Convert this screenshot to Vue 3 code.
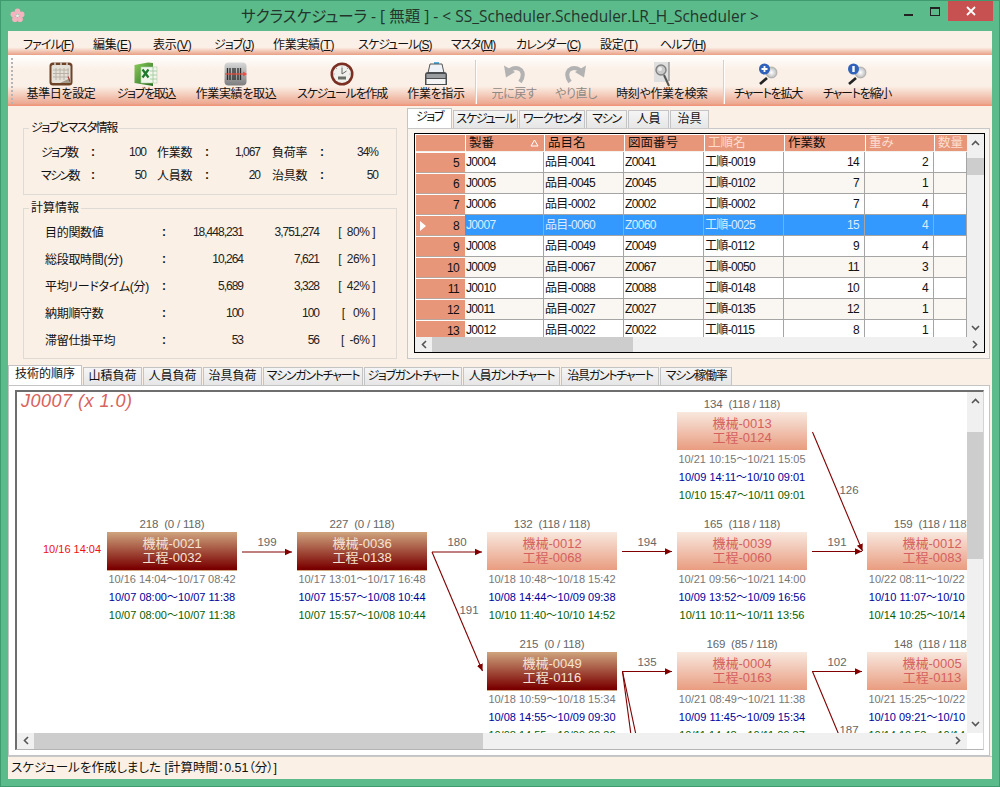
<template>
  <div class="win">
    <header class="titlebar">
      <svg class="logo" viewBox="0 0 16 16">
        <g fill="#f4b4bf">
          <circle cx="8" cy="3.6" r="3" /><circle cx="12.4" cy="6.8" r="3" /><circle cx="10.7" cy="12" r="3" />
          <circle cx="5.3" cy="12" r="3" /><circle cx="3.6" cy="6.8" r="3" />
        </g>
        <circle cx="8" cy="8.2" r="1.6" fill="#fbe6ea" />
      </svg>
      <div class="title">サクラスケジューラ - [ 無題 ] - &lt; SS_Scheduler.Scheduler.LR_H_Scheduler &gt;</div>
      <i class="wmin"></i>
      <i class="wmax"></i>
      <div class="wclose">
        <svg viewBox="0 0 10 10" width="10" height="10"><path d="M1 1L9 9M9 1L1 9" stroke="#fff" stroke-width="1.8" /></svg>
      </div>
    </header>

    <div class="client">
      <nav class="menu">
        <span v-for="m in menus" :key="m[0]" :class="{ kana: hasKana(m[0]) }">{{ m[0] }}(<u>{{ m[1] }}</u>)</span>
      </nav>

      <div class="toolbar">
        <div class="grip"></div>
        <template v-for="b in tools" :key="b.label">
          <i v-if="b.sep" class="tsep"></i>
          <div class="tool" :class="{ off: b.off, kana: hasKana(b.label) }">
            <div class="ticon">
              <svg v-if="b.icon === 'cal'" viewBox="0 0 24 24" width="24" height="24">
                <rect x="0.5" y="0.5" width="23" height="23" rx="3.5" fill="#6f4328" />
                <rect x="2.5" y="3" width="19" height="18" rx="1.5" fill="#e6e1d8" />
                <path d="M4 8h16M4 11.5h16M4 15h16M7 6v12M11 6v12M15 6v12M19 6v8" stroke="#b8b2a6" stroke-width="1" />
                <path d="M11 21L21.5 16V21Z" fill="#a89c8e" /><path d="M19 14.5l2 5" stroke="#a6403a" stroke-width="1.2" />
                <path d="M6 0.5v4M12 0.5v4M18 0.5v4" stroke="#ddd" stroke-width="1.4" />
              </svg>
              <svg v-else-if="b.icon === 'xls'" viewBox="0 0 24 24" width="24" height="24">
                <defs>
                  <linearGradient id="xg" x1="0" y1="0" x2="1" y2="1"><stop offset="0" stop-color="#8ccb5a" /><stop offset="1" stop-color="#246b1f" /></linearGradient>
                </defs>
                <path d="M0.5 3L14 0.5L19 1V24L0.5 21Z" fill="url(#xg)" />
                <rect x="7" y="5" width="16" height="16" fill="#f1f6ea" stroke="#b6ccb0" stroke-width="0.6" />
                <path d="M16 9h7M16 13h7M16 17h7M19 5v16" stroke="#9cc69a" stroke-width="0.8" />
                <path d="M8.5 7.5l6 8M14.5 7.5l-6 8" stroke="#1e7a2c" stroke-width="2.2" />
              </svg>
              <svg v-else-if="b.icon === 'bar'" viewBox="0 0 24 24" width="24" height="24">
                <defs>
                  <linearGradient id="bg" x1="0" y1="0" x2="0" y2="1"><stop offset="0" stop-color="#d8d8d8" /><stop offset="1" stop-color="#7d7d7d" /></linearGradient>
                </defs>
                <rect x="0.5" y="0.5" width="22" height="23" rx="4" fill="url(#bg)" />
                <path d="M3.5 6v12M6 6v12M9 6v12M11 6v12M14 6v12M16.5 6v12" stroke="#2b2b2b" stroke-width="1.3" />
                <path d="M1 12H20" stroke="#ef4a3c" stroke-width="1.2" /><path d="M19 9.5L23 12L19 14.5Z" fill="#ef4a3c" />
              </svg>
              <svg v-else-if="b.icon === 'clock'" viewBox="0 0 24 24" width="24" height="24">
                <circle cx="12" cy="12" r="11.5" fill="#7b2f22" />
                <circle cx="12" cy="12" r="9" fill="#f0f0ec" />
                <path d="M12 12V5.5M12 12L16.5 9" stroke="#555" stroke-width="0.9" />
                <rect x="8" y="14.5" width="8" height="3" fill="#6a6d66" />
                <path d="M12 3.5v1M20.5 12h-1M3.5 12h1M6 6l.8.8M18 6l-.8.8" stroke="#888" />
              </svg>
              <svg v-else-if="b.icon === 'print'" viewBox="0 0 24 24" width="24" height="24">
                <rect x="10" y="-1" width="5" height="3" fill="#58aee0" />
                <path d="M6 2H18L20 11H4Z" fill="#eef2f6" stroke="#444" stroke-width="0.9" />
                <path d="M1 13Q1 10 4 10H20Q23 10 23 13V23H1Z" fill="#4a4e51" />
                <rect x="2.5" y="12" width="19" height="4" fill="#9a9da0" />
                <rect x="2.5" y="17" width="19" height="5" fill="#f4f4f4" />
              </svg>
              <svg v-else-if="b.icon === 'undo'" viewBox="0 0 24 24" width="24" height="24">
                <path d="M8 8Q14 4 19 8Q23 13 18 20" fill="none" stroke="#b2b2b2" stroke-width="4" />
                <path d="M2 3.5L4 15.5L13 10Z" fill="#b2b2b2" />
              </svg>
              <svg v-else-if="b.icon === 'redo'" viewBox="0 0 24 24" width="24" height="24">
                <path d="M16 8Q10 4 5 8Q1 13 6 20" fill="none" stroke="#b2b2b2" stroke-width="4" />
                <path d="M22 3.5L20 15.5L11 10Z" fill="#b2b2b2" />
              </svg>
              <svg v-else-if="b.icon === 'find'" viewBox="0 0 24 30" width="24" height="30">
                <rect x="4" y="0" width="15" height="20" fill="#dfdfdf" />
                <path d="M19 0V19" stroke="#777" stroke-width="1" />
                <circle cx="11" cy="8" r="5" fill="#c9c9c9" stroke="#808080" stroke-width="1.4" />
                <circle cx="10" cy="7" r="2" fill="#eee" />
                <path d="M14 13L19 24" stroke="#555" stroke-width="2" />
              </svg>
              <svg v-else viewBox="0 0 24 24" width="24" height="24">
                <defs>
                  <radialGradient id="wg"><stop offset="0" stop-color="#fff" /><stop offset="1" stop-color="#b9b9b9" /></radialGradient>
                </defs>
                <circle cx="15.5" cy="10.5" r="5.5" fill="url(#wg)" stroke="#999" stroke-width="0.6" />
                <circle cx="8.5" cy="7" r="5.5" fill="#2f62b8" />
                <path v-if="b.icon === 'plus'" d="M5.5 7h6M8.5 4v6" stroke="#fff" stroke-width="1.8" />
                <path v-else d="M8.5 4v6" stroke="#fff" stroke-width="2.4" />
                <path d="M11 16L4 22" stroke="#222" stroke-width="2.6" />
              </svg>
            </div>
            <span>{{ b.label }}</span>
          </div>
        </template>
      </div>

      <section class="mid">
        <div class="left">
          <fieldset class="fs fs1">
            <legend class="kana">ジョブとマスタ情報</legend>
            <div class="g1">
              <template v-for="(c, i) in group1" :key="i">
                <span class="lbl" :class="{ kana: hasKana(c[0]) }">{{ c[0] }}</span><b>:</b><span class="val">{{ c[1] }}</span>
              </template>
            </div>
          </fieldset>
          <fieldset class="fs fs2">
            <legend>計算情報</legend>
            <div class="g2">
              <template v-for="r in group2" :key="r[0]">
                <span class="lbl">{{ r[0] }}</span><b>:</b>
                <span class="val">{{ r[1] }}</span><span class="val">{{ r[2] }}</span><span class="val pct">{{ r[3] }}</span>
              </template>
            </div>
          </fieldset>
        </div>

        <div class="right">
          <div class="tabs tabs-top">
            <span v-for="(t, i) in topTabs" :key="t" class="tab" :class="{ on: i === 0, kana: hasKana(t) }">{{ t }}</span>
          </div>
          <div class="tabpanel">
            <div class="dg">
              <div class="dg-main">
                <div class="dg-table">
                  <div class="th rh"></div>
                  <div v-for="h in heads" :key="h.t" class="th" :class="{ pale: h.pale }">
                    {{ h.t }}<svg v-if="h.sort" class="sort" viewBox="0 0 9 8" width="9" height="8"><path d="M4.5 1L8 7H1Z" fill="none" stroke="#fff" /></svg>
                  </div>
                  <template v-for="(r, i) in rows" :key="r[0]">
                    <div class="rowh">
                      <svg v-if="r[0] === 8" viewBox="0 0 6 10" width="6" height="10"><path d="M0 0L6 5L0 10Z" fill="#fff" /></svg>
                      {{ r[0] }}
                    </div>
                    <div
                      v-for="(c, j) in r.slice(1)"
                      :key="j"
                      class="td"
                      :class="{ sel: r[0] === 8, alt: i % 2 === 1 && r[0] !== 8, num: j > 3 && j < 6 }"
                    >{{ c }}</div>
                  </template>
                </div>
                <div class="vbar vbar-top">
                  <svg viewBox="0 0 9 6" width="9" height="6"><path d="M1 5L4.5 1.5L8 5" fill="none" stroke="#555" stroke-width="1.6" /></svg>
                  <i class="thumb"></i>
                  <svg class="endarrow" viewBox="0 0 9 6" width="9" height="6"><path d="M1 1L4.5 4.5L8 1" fill="none" stroke="#555" stroke-width="1.6" /></svg>
                </div>
              </div>
              <div class="hbar hbar-top">
                <svg viewBox="0 0 6 9" width="6" height="9"><path d="M5 1L1.5 4.5L5 8" fill="none" stroke="#555" stroke-width="1.6" /></svg>
                <i class="thumb"></i>
                <svg class="endarrow" viewBox="0 0 6 9" width="6" height="9"><path d="M1 1L4.5 4.5L1 8" fill="none" stroke="#555" stroke-width="1.6" /></svg>
              </div>
            </div>
          </div>
        </div>
      </section>

      <div class="tabs tabs-bottom">
        <span v-for="(t, i) in bottomTabs" :key="t" class="tab" :class="{ on: i === 0, kana: hasKana(t) }">{{ t }}</span>
      </div>

      <section class="chartpanel">
        <div class="chartframe">
          <div class="canvas">
            <div class="charttitle">J0007  (x 1.0)</div>
            <div class="due">10/16 14:04</div>
            <div v-for="n in nodes" :key="n.a + n.b" class="node" :style="{ left: n.x - 17 + 'px', top: n.y - 411 + 'px' }">
              <div class="cap">{{ n.cap }}</div>
              <div class="box" :class="{ dark: n.dark }">
                <div>{{ n.a }}</div>
                <div>{{ n.b }}</div>
              </div>
              <div class="tm t1">{{ n.t[0] }}</div>
              <div class="tm t2">{{ n.t[1] }}</div>
              <div class="tm t3">{{ n.t[2] }}</div>
            </div>
            <svg class="links" viewBox="17 392 950 341" width="950" height="341">
              <defs>
                <marker id="ah" markerUnits="userSpaceOnUse" markerWidth="8" markerHeight="8" refX="7" refY="4" orient="auto">
                  <path d="M0 0.8L7 4L0 7.2Z" fill="#800000" />
                </marker>
              </defs>
              <path v-for="(l, i) in links" :key="i" :d="l.d" :marker-end="l.open ? null : 'url(#ah)'" fill="none" stroke="#800000" stroke-width="1.1" />
            </svg>
            <span v-for="l in linkLabels" :key="l[1] + '-' + l[2]" class="linklabel" :style="{ left: l[1] - 17 + 'px', top: l[2] - 392 + 'px' }">{{ l[0] }}</span>
          </div>
          <div class="vbar vbar-chart">
            <svg viewBox="0 0 9 6" width="9" height="6"><path d="M1 5L4.5 1.5L8 5" fill="none" stroke="#555" stroke-width="1.6" /></svg>
            <i class="thumb"></i>
            <svg class="endarrow" viewBox="0 0 9 6" width="9" height="6"><path d="M1 1L4.5 4.5L8 1" fill="none" stroke="#555" stroke-width="1.6" /></svg>
          </div>
          <div class="hbar hbar-chart">
            <svg viewBox="0 0 6 9" width="6" height="9"><path d="M5 1L1.5 4.5L5 8" fill="none" stroke="#555" stroke-width="1.6" /></svg>
            <i class="thumb"></i>
            <svg class="endarrow" viewBox="0 0 6 9" width="6" height="9"><path d="M1 1L4.5 4.5L1 8" fill="none" stroke="#555" stroke-width="1.6" /></svg>
          </div>
          <div class="corner"></div>
        </div>
      </section>

      <footer class="status">スケジュールを作成しました [計算時間：0.51（分）]</footer>
    </div>
  </div>
</template>

<script setup>
const hasKana = (t) => /[ァ-ヶ]/.test(t)

const menus = [
  ['ファイル', 'F'], ['編集', 'E'], ['表示', 'V'], ['ジョブ', 'J'], ['作業実績', 'T'],
  ['スケジュール', 'S'], ['マスタ', 'M'], ['カレンダー', 'C'], ['設定', 'T'], ['ヘルプ', 'H'],
]

const tools = [
  { label: '基準日を設定', icon: 'cal' },
  { label: 'ジョブを取込', icon: 'xls' },
  { label: '作業実績を取込', icon: 'bar' },
  { label: 'スケジュールを作成', icon: 'clock' },
  { label: '作業を指示', icon: 'print' },
  { label: '元に戻す', icon: 'undo', off: true, sep: true },
  { label: 'やり直し', icon: 'redo', off: true },
  { label: '時刻や作業を検索', icon: 'find' },
  { label: 'チャートを拡大', icon: 'plus', sep: true },
  { label: 'チャートを縮小', icon: 'minus' },
]

const group1 = [
  ['ジョブ数', '100'], ['作業数', '1,067'], ['負荷率', '34%'],
  ['マシン数', '50'], ['人員数', '20'], ['治具数', '50'],
]

const group2 = [
  ['目的関数値', '18,448,231', '3,751,274', '[  80% ]'],
  ['総段取時間(分)', '10,264', '7,621', '[  26% ]'],
  ['平均リードタイム(分)', '5,689', '3,328', '[  42% ]'],
  ['納期順守数', '100', '100', '[   0% ]'],
  ['滞留仕掛平均', '53', '56', '[  -6% ]'],
]

const topTabs = ['ジョブ', 'スケジュール', 'ワークセンタ', 'マシン', '人員', '治具']
const bottomTabs = ['技術的順序', '山積負荷', '人員負荷', '治具負荷', 'マシンガントチャート', 'ジョブガントチャート', '人員ガントチャート', '治具ガントチャート', 'マシン稼働率']

const heads = [
  { t: '製番', sort: true }, { t: '品目名' }, { t: '図面番号' },
  { t: '工順名', pale: true }, { t: '作業数' }, { t: '重み', pale: true }, { t: '数量', pale: true },
]

const rows = [
  [5, 'J0004', '品目-0041', 'Z0041', '工順-0019', 14, 2, ''],
  [6, 'J0005', '品目-0045', 'Z0045', '工順-0102', 7, 1, ''],
  [7, 'J0006', '品目-0002', 'Z0002', '工順-0002', 7, 4, ''],
  [8, 'J0007', '品目-0060', 'Z0060', '工順-0025', 15, 4, ''],
  [9, 'J0008', '品目-0049', 'Z0049', '工順-0112', 9, 4, ''],
  [10, 'J0009', '品目-0067', 'Z0067', '工順-0050', 11, 3, ''],
  [11, 'J0010', '品目-0088', 'Z0088', '工順-0148', 10, 4, ''],
  [12, 'J0011', '品目-0027', 'Z0027', '工順-0135', 12, 1, ''],
  [13, 'J0012', '品目-0022', 'Z0022', '工順-0115', 8, 1, ''],
]

const nodes = [
  { x: 107, y: 532, dark: true, cap: '218  (0 / 118)', a: '機械-0021', b: '工程-0032', t: ['10/16 14:04～10/17 08:42', '10/07 08:00～10/07 11:38', '10/07 08:00～10/07 11:38'] },
  { x: 297, y: 532, dark: true, cap: '227  (0 / 118)', a: '機械-0036', b: '工程-0138', t: ['10/17 13:01～10/17 16:48', '10/07 15:57～10/08 10:44', '10/07 15:57～10/08 10:44'] },
  { x: 487, y: 532, cap: '132  (118 / 118)', a: '機械-0012', b: '工程-0068', t: ['10/18 10:48～10/18 15:42', '10/08 14:44～10/09 09:38', '10/10 11:40～10/10 14:52'] },
  { x: 677, y: 412, cap: '134  (118 / 118)', a: '機械-0013', b: '工程-0124', t: ['10/21 10:15～10/21 15:05', '10/09 14:11～10/10 09:01', '10/10 15:47～10/11 09:01'] },
  { x: 677, y: 532, cap: '165  (118 / 118)', a: '機械-0039', b: '工程-0060', t: ['10/21 09:56～10/21 14:00', '10/09 13:52～10/09 16:56', '10/11 10:11～10/11 13:56'] },
  { x: 867, y: 532, cap: '159  (118 / 118)', a: '機械-0012', b: '工程-0083', t: ['10/22 08:11～10/22 13:05', '10/10 11:07～10/10 15:42', '10/14 10:25～10/14 15:00'] },
  { x: 487, y: 652, dark: true, cap: '215  (0 / 118)', a: '機械-0049', b: '工程-0116', t: ['10/18 10:59～10/18 15:34', '10/08 14:55～10/09 09:30', '10/08 14:55～10/09 09:30'] },
  { x: 677, y: 652, cap: '169  (85 / 118)', a: '機械-0004', b: '工程-0163', t: ['10/21 08:49～10/21 11:38', '10/09 11:45～10/09 15:34', '10/11 14:48～10/11 09:37'] },
  { x: 867, y: 652, cap: '148  (118 / 118)', a: '機械-0005', b: '工程-0113', t: ['10/21 15:25～10/22 09:14', '10/10 09:21～10/10 13:10', '10/14 10:53～10/14 15:28'] },
]

const links = [
  { d: 'M242 552H292' },
  { d: 'M432 552H482' },
  { d: 'M432 552L482.5 671' },
  { d: 'M622 551.5H672' },
  { d: 'M812 551.5H862' },
  { d: 'M812.5 432L862.5 551' },
  { d: 'M622 671.5H672' },
  { d: 'M622.5 671.5L631 735', open: true },
  { d: 'M622.5 671.5L636 735', open: true },
  { d: 'M812 671.5H862' },
  { d: 'M812.5 671.5L839 735', open: true },
]

const linkLabels = [
  ['199', 267, 542], ['180', 457, 542], ['191', 469, 610], ['194', 647, 542], ['191', 837, 542],
  ['126', 849, 490], ['135', 647, 662], ['102', 837, 662], ['187', 849, 730],
]
</script>

<style scoped>
.win {
  width: 1000px;
  height: 787px;
  box-sizing: border-box;
  background: #5bbb8b;
  border: 1px solid #3f9a70;
  padding: 0 7px 7px;
  display: flex;
  flex-direction: column;
  font-family: "Liberation Sans", "Noto Sans CJK JP", sans-serif;
  font-feature-settings: "palt";
  font-size: 12px;
  color: #111;
  overflow: hidden;
}
.titlebar { height: 30px; flex: none; position: relative; }
.logo { position: absolute; left: 2px; top: 7px; width: 15px; height: 15px; }
.title {
  text-align: center;
  font-family: "Open Sans", "Noto Sans CJK JP", sans-serif;
  font-size: 15.5px;
  line-height: 30px;
  color: #24352c;
  white-space: pre;
}
.wmin { position: absolute; left: 896px; top: 13px; width: 9px; height: 2px; background: #222; }
.wmax { position: absolute; left: 922px; top: 6px; width: 8px; height: 6px; border: 1px solid #222; border-top-width: 2px; }
.wclose {
  position: absolute;
  left: 940px;
  top: 0;
  width: 45px;
  height: 20px;
  background: #c75050;
  display: flex;
  align-items: center;
  justify-content: center;
}
.client { flex: 1; display: flex; flex-direction: column; background: #faf0e6; min-height: 0; }

.menu {
  height: 24px;
  flex: none;
  box-sizing: border-box;
  padding-left: 15px;
  display: grid;
  grid-template-columns: 70px 60px 61px 59px 85px 93px 65px 84px 60px 70px;
  align-items: center;
  background: linear-gradient(#fbf0e7 0, #fbf0e7 68%, #e99f84 100%);
  white-space: nowrap;
  letter-spacing: -0.3px;
}
.menu .kana { letter-spacing: -0.95px; }
.toolbar {
  height: 51px;
  flex: none;
  box-sizing: border-box;
  display: grid;
  grid-template-columns: 11px 84px 86px 94px 118px 70px 10px 66px 58px 114px 4px 90px 88px;
  background: linear-gradient(#ffffff 0, #fbf0e7 30%, #fbf0e7 62%, #eca78f 98%, #f09579 100%);
  border-bottom: 1px solid #f09579;
  position: relative;
}
.grip { margin: 3px 0 1px 3px; width: 2px; border-left: 2px dotted #b5b5b5; }
.tsep { width: 1px; background: #d5d0ca; box-shadow: 1px 0 #fff; margin: 5px 0 0 4px; justify-self: start; height: 44px; }
.tool { display: flex; flex-direction: column; align-items: center; white-space: nowrap; letter-spacing: -0.35px; }
.tool.kana { letter-spacing: -1.25px; }
.tool.off { color: #8e8a86; }
.ticon { height: 31px; padding-top: 7px; box-sizing: border-box; }
.ticon svg { display: block; }
.tool span { line-height: 16px; }

.mid { height: 257px; flex: none; display: grid; grid-template-columns: 399px 583px; }
.left { padding: 14px 0 0 15px; display: flex; flex-direction: column; gap: 5px; box-sizing: border-box; }
.fs {
  margin: 0;
  padding: 0;
  border: 1px solid #dedbd6;
  width: 374px;
  min-width: 0;
  box-sizing: border-box;
}
.fs legend { padding: 0 2px; margin-left: 5px; line-height: 16px; height: 16px; font-size: 12px; }
.fs legend.kana { letter-spacing: -1.3px; }
.fs1 { height: 75px; }
.fs2 { height: 159px; }
.lbl { white-space: pre; letter-spacing: -0.3px; }
.g1 .lbl.kana { letter-spacing: -1.7px; }
.val { text-align: right; letter-spacing: -1px; white-space: pre; color: #222; }
.pct { letter-spacing: -0.5px; }
.g1 b, .g2 b { font-weight: 700; }
.g1 {
  padding: 4px 0 0 17px;
  display: grid;
  grid-template-columns: 50px 8px 47px 59px 8px 47px 60px 8px 50px;
  grid-auto-rows: 23px;
  align-items: center;
}
.g1 > :nth-child(4), .g1 > :nth-child(13) { margin-left: 11px; }
.g1 > :nth-child(7), .g1 > :nth-child(16) { margin-left: 12px; }
.g2 {
  padding: 2px 0 0 21px;
  display: grid;
  grid-template-columns: 117px 10px 71px 76px 56px;
  grid-auto-rows: 27px;
  align-items: center;
}

.tabs { display: flex; align-items: flex-end; }
.tab {
  box-sizing: border-box;
  height: 18px;
  line-height: 17px;
  text-align: center;
  background: linear-gradient(#f5f5f5, #e6e6e6);
  border: 1px solid #c4c4c4;
  border-bottom: none;
  margin-right: 1px;
  white-space: nowrap;
}
.tab.kana { letter-spacing: -1.3px; }
.tab.on { background: #fff; height: 20px; position: relative; }
.tabs-top { height: 22px; box-sizing: border-box; padding-top: 2px; }
.tabs-top .tab:nth-child(1) { width: 45px; }
.tabs-top .tab:nth-child(2) { width: 65px; }
.tabs-top .tab:nth-child(3) { width: 66px; }
.tabs-top .tab:nth-child(4) { width: 41px; }
.tabs-top .tab:nth-child(5) { width: 41px; }
.tabs-top .tab:nth-child(6) { width: 39px; }
.tabpanel {
  height: 231px;
  box-sizing: border-box;
  width: 583px;
  border: 1px solid #c8c8c8;
  background: #fbf5ef;
  padding: 4px 4px 4px 6px;
}
.dg { height: 220px; width: 571px; box-sizing: border-box; border: 1px solid #000; background: #fff; display: flex; flex-direction: column; }
.dg-main { height: 203px; display: flex; flex: none; }
.dg-table {
  margin-left: 1px;
  width: 551px;
  height: 203px;
  padding-top: 1px;
  box-sizing: border-box;
  overflow: hidden;
  display: grid;
  grid-template-columns: 49px 79px 80px 80px 80px 81px 69px 33px;
  grid-template-rows: 17px;
  grid-auto-rows: 21px;
  font-size: 12px;
  letter-spacing: -0.65px;
}
.th {
  background: #e8967a;
  border-left: 1px solid #fff;
  border-bottom: 1px solid #f4f0ec;
  padding-left: 3px;
  line-height: 16px;
  font-size: 12.5px;
  letter-spacing: 0;
  position: relative;
  white-space: nowrap;
  overflow: hidden;
}
.th.rh { border-left: none; padding: 0; }
.th.pale { color: #fbdccd; }
.sort { position: absolute; right: 5px; top: 4px; }
.rowh {
  background: #e8967a;
  border-top: 1px solid #fff;
  border-bottom: 1px solid #b7a69d;
  text-align: right;
  padding-right: 6px;
  line-height: 20px;
  position: relative;
}
.rowh svg { position: absolute; left: 4px; top: 5px; }
.td {
  border-right: 1px solid #a5a5a5;
  border-bottom: 1px solid #a5a5a5;
  line-height: 20px;
  padding: 0 2px 0 1px;
  background: #fff;
  white-space: nowrap;
  overflow: hidden;
}
.td.alt { background: #faf6f2; }
.td.sel { background: #3399ff; color: #dcecff; }
.td.num { text-align: right; padding-right: 5px; }

.vbar { background: #f0f0f0; position: relative; }
.vbar svg { position: absolute; top: 6px; left: 4px; }
.vbar svg.endarrow { top: auto; bottom: 6px; }
.vbar .thumb { position: absolute; left: 0; right: 0; background: #cdcdcd; }
.hbar { background: #f0f0f0; position: relative; }
.hbar svg { position: absolute; left: 6px; top: 3px; }
.hbar svg.endarrow { left: auto; right: 6px; }
.hbar .thumb { position: absolute; top: 0; bottom: 0; background: #cdcdcd; }
.vbar-top { width: 17px; }
.vbar-top .thumb { top: 24px; height: 17px; }
.hbar-top { height: 15px; }
.hbar-top .thumb { left: 17px; width: 201px; }

.tabs-bottom { height: 22px; flex: none; box-sizing: border-box; }
.tabs-bottom .tab:nth-child(1) { width: 74px; }
.tabs-bottom .tab:nth-child(2) { width: 59px; }
.tabs-bottom .tab:nth-child(3) { width: 59px; }
.tabs-bottom .tab:nth-child(4) { width: 59px; }
.tabs-bottom .tab:nth-child(5) { width: 100px; }
.tabs-bottom .tab:nth-child(6) { width: 98px; }
.tabs-bottom .tab:nth-child(7) { width: 97px; }
.tabs-bottom .tab:nth-child(8) { width: 98px; }
.tabs-bottom .tab:nth-child(9) { width: 72px; }

.chartpanel {
  height: 371px;
  flex: none;
  width: 982px;
  box-sizing: border-box;
  border: 1px solid #c4c4c4;
  background: #fff;
  padding: 4px 6px 5px 6px;
}
.chartframe {
  width: 969px;
  height: 360px;
  box-sizing: border-box;
  border-top: 2px solid #6e6e6e;
  border-left: 2px solid #6e6e6e;
  border-right: 1px solid #d4d4d4;
  border-bottom: 1px solid #b4b4b4;
  display: grid;
  grid-template-columns: 950px 16px;
  grid-template-rows: 341px 16px;
}
.canvas { position: relative; overflow: hidden; background: #fff; }
.charttitle {
  position: absolute;
  left: 4px;
  top: -1px;
  font-style: italic;
  font-size: 18px;
  letter-spacing: 0.5px;
  color: #d8625c;
  white-space: pre;
}
.due { position: absolute; left: 26px; top: 151px; color: #f01010; font-size: 11px; white-space: nowrap; }
.node { position: absolute; width: 130px; font-size: 11px; text-align: center; }
.cap { height: 19px; line-height: 22px; color: #666; white-space: pre; font-size: 11.5px; letter-spacing: -0.2px; }
.box {
  height: 38px;
  box-sizing: border-box;
  padding-top: 5px;
  background: linear-gradient(#f8e8de, #e99c80);
  color: #d4615e;
  font-size: 13px;
  line-height: 13.5px;
  white-space: pre;
}
.box.dark {
  background: linear-gradient(#cfa47e, #7a0000 96%);
  color: #f6e4d4;
  height: 39px;
  border-bottom: 1px solid #d2a67f;
  margin-bottom: -1px;
}
.tm { line-height: 18px; height: 18px; white-space: nowrap; width: 130px; }
.t1 { color: #777; }
.t2 { color: #00009a; }
.t3 { color: #0a6000; }
.links { position: absolute; left: 0; top: 0; }
.linklabel {
  position: absolute;
  transform: translate(-50%, -50%);
  font-size: 11.5px;
  color: #666;
}
.vbar-chart { grid-row: 1; grid-column: 2; }
.vbar-chart .thumb { top: 40px; height: 127px; }
.hbar-chart { grid-row: 2; grid-column: 1; }
.hbar-chart .thumb { left: 17px; width: 449px; }
.corner { background: #fff; }

.status {
  flex: 1;
  border-top: 1px solid #c8c8c8;
  padding-left: 3px;
  line-height: 22px;
  font-size: 12.5px;
  background: #faf0e6;
}
</style>
